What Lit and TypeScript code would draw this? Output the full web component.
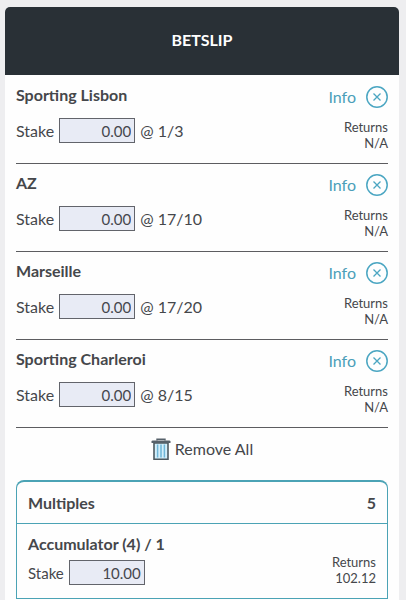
import { LitElement, html, css } from "lit";
import { customElement, property, state } from "lit/decorators.js";

interface Selection {
  id: string;
  name: string;
  odds: string;
}

const shared = css`
  * {
    box-sizing: border-box;
  }
  button {
    display: flex;
    align-items: center;
    padding: 0;
    border: 0;
    background: none;
    font: inherit;
    color: inherit;
    cursor: pointer;
  }
  h1,
  h2,
  h3 {
    margin: 0;
    font-size: 16px;
    line-height: 24px;
    font-weight: 700;
  }
  .stake {
    display: flex;
    align-items: center;
    gap: 5px;
  }
  .stake input {
    width: 76px;
    height: 25px;
    padding: 0 3px;
    border: 1px solid #62646b;
    border-radius: 0;
    background: #e8ebf5;
    color: #45474d;
    font: inherit;
    font-size: 15px;
    text-align: right;
  }
  .returns {
    font-size: 13px;
    line-height: 16px;
    text-align: right;
  }
`;

@customElement("bet-selection")
class BetSelection extends LitElement {
  @property() name = "";
  @property() odds = "";

  static styles = [
    shared,
    css`
      :host {
        display: flex;
        justify-content: space-between;
        height: 88px;
        box-sizing: border-box;
        border-bottom: 1px solid #5c5d60;
      }
      .main {
        padding-top: 7px;
      }
      .main h2 {
        margin-bottom: 11px;
      }
      .side {
        display: flex;
        flex-direction: column;
        align-items: flex-end;
        gap: 10px;
        padding-top: 9px;
      }
      .actions {
        display: flex;
        align-items: center;
        gap: 10px;
      }
      .info {
        color: #4b9fb9;
        text-decoration: none;
      }
      .close {
        width: 22px;
        height: 22px;
      }
    `,
  ];

  private remove() {
    this.dispatchEvent(new CustomEvent("remove"));
  }

  render() {
    return html`
      <div class="main">
        <h2>${this.name}</h2>
        <div class="stake">
          <label for="stake">Stake</label>
          <input id="stake" type="text" inputmode="decimal" value="0.00" />
          <span>@ ${this.odds}</span>
        </div>
      </div>
      <div class="side">
        <div class="actions">
          <a class="info" href="#info">Info</a>
          <button type="button" aria-label="Remove ${this.name}" @click=${this.remove}>
            <svg class="close" viewBox="0 0 22 22" fill="none" stroke="#4ba6c2">
              <circle cx="11" cy="11" r="10.2" stroke-width="1.5" />
              <path d="M7.5 7.5l7 7M14.5 7.5l-7 7" stroke-width="1.3" />
            </svg>
          </button>
        </div>
        <div class="returns">Returns<br />N/A</div>
      </div>
    `;
  }
}

@customElement("bet-multiples")
class BetMultiples extends LitElement {
  static styles = [
    shared,
    css`
      :host {
        display: flex;
        flex-direction: column;
        border: 2px solid #4ba3b5;
        border-width: 2px 1px 0;
        border-radius: 8px 8px 0 0;
      }
      .head,
      .row {
        display: flex;
        justify-content: space-between;
        padding: 0 11px;
        border-bottom: 1px solid #4ba3b5;
      }
      .head {
        height: 42px;
        align-items: center;
      }
      .count {
        font-weight: 700;
      }
      .row {
        height: 75px;
        padding-top: 8px;
      }
      .row h3 {
        margin-bottom: 4px;
      }
      .stake label {
        font-size: 15px;
      }
      .returns {
        padding-top: 22px;
      }
    `,
  ];

  render() {
    return html`
      <div class="head">
        <h2>Multiples</h2>
        <span class="count">5</span>
      </div>
      <div class="row">
        <div>
          <h3>Accumulator (4) / 1</h3>
          <div class="stake">
            <label for="acca">Stake</label>
            <input id="acca" type="text" inputmode="decimal" value="10.00" />
          </div>
        </div>
        <div class="returns">Returns<br />102.12</div>
      </div>
    `;
  }
}

@customElement("app-root")
class AppRoot extends LitElement {
  @state() private selections: Selection[] = [
    { id: "a", name: "Sporting Lisbon", odds: "1/3" },
    { id: "b", name: "AZ", odds: "17/10" },
    { id: "c", name: "Marseille", odds: "17/20" },
    { id: "d", name: "Sporting Charleroi", odds: "8/15" },
  ];

  static styles = [
    shared,
    css`
      :host {
        display: flex;
        flex-direction: column;
        min-height: 100vh;
        box-sizing: border-box;
        padding: 7px 7px 0 5px;
        background: #eeeef0;
        color: #45474b;
        font-family: Lato, "Open Sans", sans-serif;
        font-size: 16px;
        line-height: 24px;
      }
      .slip {
        flex: 1;
        border-radius: 5px 5px 0 0;
        background: #fefefe;
      }
      .title {
        display: flex;
        align-items: center;
        justify-content: center;
        height: 68px;
        padding-bottom: 2px;
        border-radius: 5px 5px 0 0;
        background: #293036;
        color: #fff;
      }
      .body {
        padding: 1px 11px 0;
      }
      .clear {
        gap: 4px;
        margin: 9px auto 19px;
      }
      .bin {
        width: 20px;
        height: 24px;
      }
    `,
  ];

  private drop(id: string) {
    this.selections = this.selections.filter((s) => s.id !== id);
  }

  private clear() {
    this.selections = [];
  }

  render() {
    return html`
      <main class="slip">
        <header class="title"><h1>BETSLIP</h1></header>
        <div class="body">
          ${this.selections.map(
            (s) => html`<bet-selection
              .name=${s.name}
              .odds=${s.odds}
              @remove=${() => this.drop(s.id)}
            ></bet-selection>`
          )}
          <button class="clear" type="button" @click=${this.clear}>
            <svg class="bin" viewBox="0 0 20 24" fill="none">
              <path d="M3 6h14v16.2H3z" fill="#d3effb" stroke="#4d5960" stroke-width="1.6" />
              <path d="M6.6 7.5v13M10 7.5v13M13.4 7.5v13" stroke="#6fb6d8" stroke-width="1.5" />
              <path d="M0.5 6V4.6q0-1.2 1.4-1.2h16.2q1.4 0 1.4 1.2V6z" fill="#56616a" />
              <path d="M6 3.6V2.2h8v1.4" stroke="#56616a" stroke-width="1.4" />
            </svg>
            <span>Remove All</span>
          </button>
          <bet-multiples></bet-multiples>
        </div>
      </main>
    `;
  }
}
